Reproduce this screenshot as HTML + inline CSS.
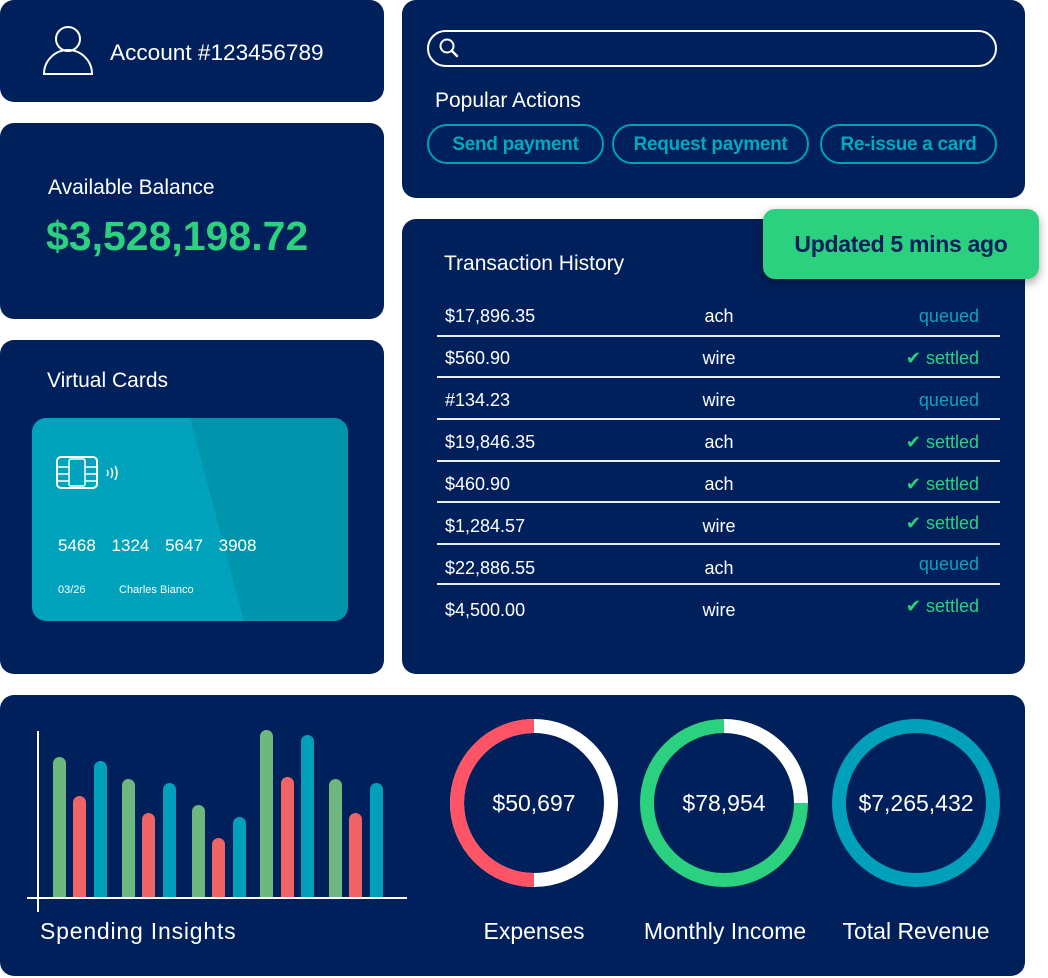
<!DOCTYPE html>
<html><head><meta charset="utf-8"><style>
*{margin:0;padding:0;box-sizing:border-box}
body{width:1048px;height:978px;background:#fff;position:relative;overflow:hidden;font-family:"Liberation Sans",sans-serif;color:#fff}
.p{position:absolute;background:#00205b;border-radius:14px}
.t{position:absolute;white-space:nowrap}
.btn{position:absolute;top:124px;height:40px;border:2px solid #00a0b8;border-radius:20px;color:#00a8c0;font-weight:bold;font-size:19px;line-height:38px;text-align:center;letter-spacing:-0.3px}
.row{position:absolute;left:437px;width:563px;height:42px;font-size:18px}
.row .a{position:absolute;left:8px;top:5px}
.row .b{position:absolute;left:232px;width:100px;text-align:center;top:5px}
.row .c{position:absolute;right:21px;top:5px}
.q{color:#12a0bb}.s{color:#2bd17e}
.sep{position:absolute;left:437px;width:563px;height:2px;background:#e8eef5}
.bar{position:absolute;width:13px;border-radius:7px 7px 0 0}
.g{background:#6db87f}.r{background:#ef6565}.bl{background:#00a0bb}
</style></head><body>
<div class="p" style="left:0;top:0;width:384px;height:102px"></div>
<svg style="position:absolute;left:42px;top:24px" width="52" height="52" viewBox="0 0 52 52"><circle cx="26" cy="15" r="12" fill="none" stroke="#fff" stroke-width="2"/><path d="M2 50 A24 24 0 0 1 50 50 Z" fill="none" stroke="#fff" stroke-width="2"/></svg>
<div class="t" style="left:110px;top:40px;font-size:22.6px">Account #123456789</div>

<div class="p" style="left:0;top:123px;width:384px;height:196px"></div>
<div class="t" style="left:48px;top:176px;font-size:21px">Available Balance</div>
<div class="t" style="left:46px;top:213px;font-size:41px;font-weight:bold;color:#2bd17e">$3,528,198.72</div>

<div class="p" style="left:0;top:340px;width:384px;height:334px"></div>
<div class="t" style="left:47px;top:369px;font-size:21px">Virtual Cards</div>
<div style="position:absolute;left:32px;top:418px;width:316px;height:203px;border-radius:14px;background:#00a2bc;overflow:hidden">
<div style="position:absolute;left:0;top:0;width:100%;height:100%;background:#0095ad;clip-path:polygon(158px 0,316px 0,316px 203px,212px 203px)"></div>
</div>
<svg style="position:absolute;left:56px;top:456px" width="70" height="34" viewBox="0 0 70 34"><rect x="1" y="1" width="40" height="31" rx="4" fill="none" stroke="#fff" stroke-width="2"/><rect x="13" y="3" width="16" height="27" rx="2" fill="none" stroke="#fff" stroke-width="1.5"/><path d="M1 11H13M1 18H13M1 25H13M29 11H41M29 18H41M29 25H41" stroke="#fff" stroke-width="1.5"/><path d="M51 14q2 3 0 6M55 12q3 5 0 10M59 10q4 7 0 14" stroke="#fff" stroke-width="1.5" fill="none"/></svg>
<div class="t" style="left:58px;top:536px;font-size:17px;word-spacing:11px">5468 1324 5647 3908</div>
<div class="t" style="left:58px;top:584px;font-size:11px">03/26</div>
<div class="t" style="left:119px;top:584px;font-size:11px">Charles Bianco</div>

<div class="p" style="left:402px;top:0;width:623px;height:198px"></div>
<div style="position:absolute;left:427px;top:30px;width:570px;height:37px;border:2px solid #fff;border-radius:19px"></div>
<svg style="position:absolute;left:438px;top:37px" width="22" height="22" viewBox="0 0 22 22"><circle cx="9" cy="9" r="6.5" fill="none" stroke="#fff" stroke-width="2"/><path d="M14 14L19 19" stroke="#fff" stroke-width="2.4" stroke-linecap="round"/></svg>
<div class="t" style="left:435px;top:89px;font-size:21px">Popular Actions</div>
<div class="btn" style="left:427px;width:177px">Send payment</div>
<div class="btn" style="left:612px;width:197px">Request payment</div>
<div class="btn" style="left:820px;width:177px">Re-issue a card</div>

<div class="p" style="left:402px;top:219px;width:623px;height:455px"></div>
<div class="t" style="left:444px;top:252px;font-size:21px">Transaction History</div>
<div style="position:absolute;left:763px;top:209px;width:276px;height:70px;background:#2bd17e;border-radius:12px;box-shadow:0 4px 10px rgba(0,0,0,.35);color:#00205b;font-weight:bold;font-size:23px;line-height:70px;text-align:center;letter-spacing:-0.3px">Updated 5 mins ago</div>

<div class="row" style="top:301px"><span class="a">$17,896.35</span><span class="b">ach</span><span class="c q">queued</span></div>
<div class="sep" style="top:335px"></div>
<div class="row" style="top:343px"><span class="a">$560.90</span><span class="b">wire</span><span class="c s">✔ settled</span></div>
<div class="sep" style="top:376px"></div>
<div class="row" style="top:385px"><span class="a">#134.23</span><span class="b">wire</span><span class="c q">queued</span></div>
<div class="sep" style="top:418px"></div>
<div class="row" style="top:427px"><span class="a">$19,846.35</span><span class="b">ach</span><span class="c s">✔ settled</span></div>
<div class="sep" style="top:460px"></div>
<div class="row" style="top:469px"><span class="a">$460.90</span><span class="b">ach</span><span class="c s">✔ settled</span></div>
<div class="sep" style="top:501px"></div>
<div class="row" style="top:511px"><span class="a">$1,284.57</span><span class="b">wire</span><span class="c s" style="top:2px">✔ settled</span></div>
<div class="sep" style="top:543px"></div>
<div class="row" style="top:553px"><span class="a">$22,886.55</span><span class="b">ach</span><span class="c q" style="top:1px">queued</span></div>
<div class="sep" style="top:583px"></div>
<div class="row" style="top:595px"><span class="a">$4,500.00</span><span class="b">wire</span><span class="c s" style="top:1px">✔ settled</span></div>

<div class="p" style="left:0;top:695px;width:1025px;height:281px"></div>
<div style="position:absolute;left:37px;top:731px;width:2px;height:181px;background:#fff"></div>
<div style="position:absolute;left:27px;top:897px;width:380px;height:2px;background:#fff"></div>
<div class="bar g" style="left:53px;top:757px;height:140px"></div>
<div class="bar r" style="left:73px;top:796px;height:101px"></div>
<div class="bar bl" style="left:94px;top:761px;height:136px"></div>
<div class="bar g" style="left:122px;top:779px;height:118px"></div>
<div class="bar r" style="left:142px;top:813px;height:84px"></div>
<div class="bar bl" style="left:163px;top:783px;height:114px"></div>
<div class="bar g" style="left:192px;top:805px;height:92px"></div>
<div class="bar r" style="left:212px;top:838px;height:59px"></div>
<div class="bar bl" style="left:233px;top:817px;height:80px"></div>
<div class="bar g" style="left:260px;top:730px;height:167px"></div>
<div class="bar r" style="left:281px;top:777px;height:120px"></div>
<div class="bar bl" style="left:301px;top:735px;height:162px"></div>
<div class="bar g" style="left:329px;top:779px;height:118px"></div>
<div class="bar r" style="left:349px;top:813px;height:84px"></div>
<div class="bar bl" style="left:370px;top:783px;height:114px"></div>
<div class="t" style="left:40px;top:918px;font-size:23px;letter-spacing:0.8px">Spending Insights</div>

<svg style="position:absolute;left:440px;top:710px" width="580" height="190" viewBox="440 710 580 190">
<circle cx="534" cy="803" r="77" fill="none" stroke="#fff" stroke-width="14"/>
<path d="M534 726 A77 77 0 0 0 534 880" fill="none" stroke="#ff5466" stroke-width="14"/>
<circle cx="724" cy="803" r="77" fill="none" stroke="#2bd17e" stroke-width="14"/>
<path d="M724 726 A77 77 0 0 1 801 803" fill="none" stroke="#fff" stroke-width="14"/>
<circle cx="916" cy="803" r="77" fill="none" stroke="#00a0bb" stroke-width="14"/>
</svg>
<div class="t" style="left:454px;width:160px;text-align:center;top:790px;font-size:23px">$50,697</div>
<div class="t" style="left:644px;width:160px;text-align:center;top:790px;font-size:23px">$78,954</div>
<div class="t" style="left:836px;width:160px;text-align:center;top:790px;font-size:23px">$7,265,432</div>
<div class="t" style="left:454px;width:160px;text-align:center;top:918px;font-size:23px">Expenses</div>
<div class="t" style="left:625px;width:200px;text-align:center;top:918px;font-size:23px">Monthly Income</div>
<div class="t" style="left:816px;width:200px;text-align:center;top:918px;font-size:23px">Total Revenue</div>
</body></html>
